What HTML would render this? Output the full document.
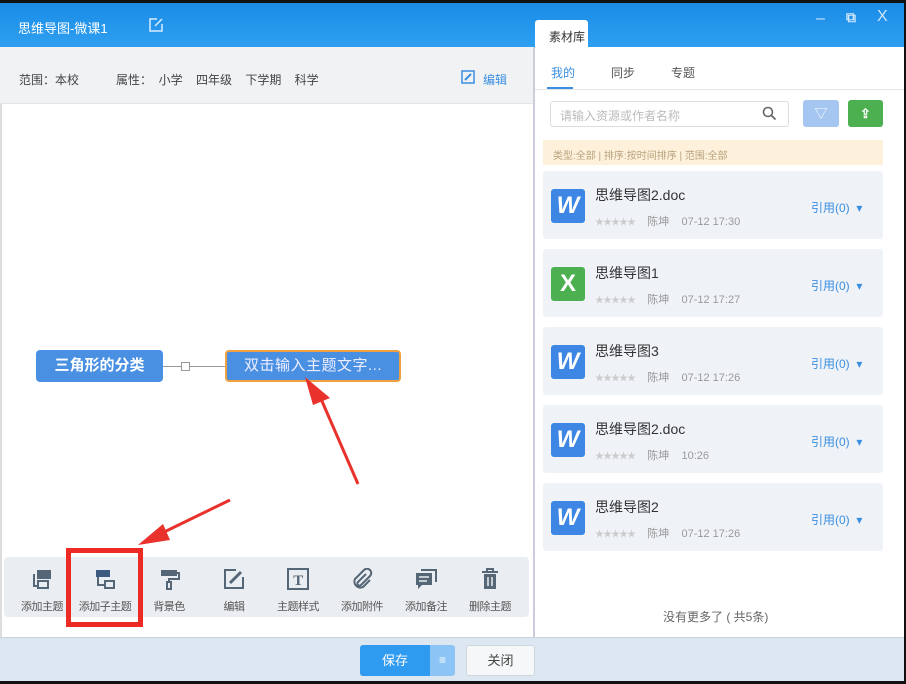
<!DOCTYPE html>
<html><head><meta charset="utf-8"><style>
*{margin:0;padding:0;box-sizing:border-box}
body{width:906px;height:684px;position:relative;overflow:hidden;background:#111;font-family:"Liberation Sans","Noto Sans CJK SC",sans-serif;font-size:12px;color:#333}
.a{position:absolute}
.tb{left:0;top:3px;width:904px;height:44px;background:linear-gradient(#1a8ce6,#2e9ff0)}
.card{left:543px;width:340px;height:68px;background:#eff3f8;border-radius:3px}
.ic{left:8px;top:18px;width:34px;height:34px;border-radius:3px;color:#fff;font-weight:bold;font-size:24px;text-align:center;line-height:34px;font-style:italic}
.nm{left:52px;top:14px;font-size:14px;color:#333}
.meta{left:52px;top:42px;font-size:11px;color:#999}
.meta b{color:#ccc;font-weight:normal;font-size:9px;letter-spacing:-1px}
.ref{left:268px;top:28px;color:#3b8ee0;font-size:12px}
.tool{top:568px;width:64px;text-align:center;font-size:11px;color:#555;white-space:nowrap;letter-spacing:-0.5px}
.tool svg{display:block;margin:0 auto 8px}
</style></head><body>
<div class="a tb"></div>
<div class="a" style="left:18px;top:18px;color:#fff;font-size:13px">思维导图-微课1</div>
<svg class="a" style="left:149px;top:18px" width="14" height="14" viewBox="0 0 14 14"><path d="M8 1H1v12h12V6" fill="none" stroke="#d8ecff" stroke-width="1.5"/><path d="M6 8l7-7" stroke="#d8ecff" stroke-width="1.5"/></svg>
<div class="a" style="left:816px;top:10px;color:#cfe6fb;font-size:16px">–</div>
<div class="a" style="left:846px;top:9px;color:#cfe6fb;font-size:14px;font-weight:bold">⧉</div>
<div class="a" style="left:877px;top:8px;color:#cfe6fb;font-size:16px">X</div>
<div class="a" style="left:0;top:47px;width:533px;height:590px;background:#fff"></div>
<div class="a" style="left:0;top:47px;width:533px;height:57px;background:#f1f2f4;border-bottom:1px solid #e4e4e4"></div>
<div class="a" style="left:19px;top:71px;font-size:12px;color:#444">范围：本校</div>
<div class="a" style="left:116px;top:71px;font-size:12px;color:#444">属性：&nbsp;&nbsp;小学&nbsp;&nbsp;&nbsp;&nbsp;四年级&nbsp;&nbsp;&nbsp;&nbsp;下学期&nbsp;&nbsp;&nbsp;&nbsp;科学</div>
<svg class="a" style="left:461px;top:70px" width="14" height="14" viewBox="0 0 14 14"><rect x="1" y="1" width="12" height="12" fill="none" stroke="#3b8ee0" stroke-width="1.5"/><path d="M4 10l6-6" stroke="#3b8ee0" stroke-width="2"/></svg>
<div class="a" style="left:483px;top:71px;color:#3b8ee0;font-size:12px">编辑</div>
<div class="a" style="left:0;top:104px;width:2px;height:533px;background:#ddd"></div>
<div class="a" style="left:36px;top:350px;width:127px;height:32px;background:#4a90e2;border-radius:4px;color:#fff;font-size:15px;font-weight:bold;text-align:center;line-height:32px">三角形的分类</div>
<div class="a" style="left:163px;top:366px;width:62px;height:1px;background:#999"></div>
<div class="a" style="left:181px;top:362px;width:9px;height:9px;border:1px solid #999;background:#fff"></div>
<div class="a" style="left:225px;top:350px;width:176px;height:32px;background:#4a90e2;border:2px solid #f0a040;border-radius:4px;color:#eef;font-size:15px;text-align:center;line-height:28px;letter-spacing:.5px">双击输入主题文字...</div>
<svg class="a" style="left:0;top:0" width="533" height="600"><path d="M358 484L318 392" stroke="#e8322b" stroke-width="3"/><path d="M305 377L330 398L313 405Z" fill="#e8322b"/><path d="M230 500L160 534" stroke="#e8322b" stroke-width="3"/><path d="M138 545L163 524L170 540Z" fill="#e8322b"/></svg>
<div class="a" style="left:4px;top:557px;width:525px;height:60px;background:#eaedf1;border-radius:4px"></div>
<div class="a tool" style="left:10px"><svg width="24" height="22" viewBox="0 0 24 22"><rect x="7" y="2" width="14" height="9" fill="#556677"/><path d="M4 6v12h14" fill="none" stroke="#556677" stroke-width="2"/><rect x="8" y="13" width="10" height="7" fill="#eaedf1" stroke="#556677" stroke-width="2"/></svg>添加主题</div>
<div class="a tool" style="left:73px"><svg width="24" height="22" viewBox="0 0 24 22"><rect x="3" y="2" width="14" height="7" fill="#3c5a80"/><path d="M5 9v8h7" fill="none" stroke="#556677" stroke-width="2"/><rect x="12" y="13" width="9" height="7" fill="#eaedf1" stroke="#556677" stroke-width="2"/></svg>添加子主题</div>
<div class="a tool" style="left:137px"><svg width="24" height="22" viewBox="0 0 24 22"><rect x="4" y="2" width="16" height="6" fill="#556677"/><path d="M20 5h2v6h-10v3" fill="none" stroke="#556677" stroke-width="2"/><rect x="10" y="14" width="4" height="7" fill="none" stroke="#556677" stroke-width="2"/></svg>背景色</div>
<div class="a tool" style="left:202px"><svg width="24" height="22" viewBox="0 0 24 22"><path d="M14 2H3v18h18V9" fill="none" stroke="#556677" stroke-width="2"/><path d="M8 15l11-11" stroke="#556677" stroke-width="3"/></svg>编辑</div>
<div class="a tool" style="left:266px"><svg width="24" height="22" viewBox="0 0 24 22"><rect x="2" y="1" width="20" height="20" fill="none" stroke="#556677" stroke-width="2"/><text x="12" y="17" font-size="15" font-weight="bold" text-anchor="middle" fill="#556677" font-family="Liberation Serif">T</text></svg>主题样式</div>
<div class="a tool" style="left:330px"><svg width="24" height="22" viewBox="0 0 24 22"><path d="M16 6l-8 8a2 2 0 003 3l9-9a4 4 0 00-6-6l-9 9a6 6 0 008 8l7-7" fill="none" stroke="#556677" stroke-width="2"/></svg>添加附件</div>
<div class="a tool" style="left:394px"><svg width="24" height="22" viewBox="0 0 24 22"><path d="M7 2h15v12" fill="none" stroke="#556677" stroke-width="2"/><path d="M2 5h16v12H8l-4 4v-4H2z" fill="#556677"/><path d="M5 9h10M5 13h8" stroke="#eaedf1" stroke-width="1.5"/></svg>添加备注</div>
<div class="a tool" style="left:458px"><svg width="24" height="22" viewBox="0 0 24 22"><path d="M4 4h16M9 4V1h6v3" fill="none" stroke="#556677" stroke-width="2"/><rect x="6" y="6" width="12" height="15" fill="#556677"/><path d="M10 9v9M14 9v9" stroke="#eaedf1" stroke-width="1.5"/></svg>删除主题</div>
<div class="a" style="left:66px;top:548px;width:77px;height:79px;border:5px solid #ee2a24"></div>
<div class="a" style="left:533px;top:47px;width:371px;height:590px;background:#fff;border-left:2px solid #ccd"></div>
<div class="a" style="left:535px;top:20px;width:53px;height:28px;background:#fff;border-radius:3px 3px 0 0;font-size:12px;padding:8px 0 0 14px;color:#333">素材库</div>
<div class="a" style="left:551px;top:64px;color:#3b8ee0;font-size:12px">我的</div>
<div class="a" style="left:611px;top:64px;color:#555;font-size:12px">同步</div>
<div class="a" style="left:671px;top:64px;color:#555;font-size:12px">专题</div>
<div class="a" style="left:547px;top:87px;width:26px;height:3px;background:#3b8ee0"></div>
<div class="a" style="left:535px;top:89px;width:369px;height:1px;background:#e6e6e6"></div>
<div class="a" style="left:550px;top:101px;width:239px;height:26px;border:1px solid #ddd;border-radius:3px;color:#bbb;font-size:12px;padding:5px 0 0 9px">请输入资源或作者名称</div>
<svg class="a" style="left:762px;top:106px" width="15" height="15" viewBox="0 0 15 15"><circle cx="6" cy="6" r="4.5" fill="none" stroke="#666" stroke-width="1.6"/><path d="M9.5 9.5l4 4" stroke="#666" stroke-width="1.8"/></svg>
<div class="a" style="left:803px;top:100px;width:36px;height:27px;background:#a5c6f0;border-radius:3px;color:#fff;text-align:center;line-height:27px;font-size:13px">▽</div>
<div class="a" style="left:848px;top:100px;width:35px;height:27px;background:#4caf50;border-radius:3px;color:#fff;text-align:center;line-height:27px;font-size:13px;font-weight:bold">⇪</div>
<div class="a" style="left:543px;top:140px;width:340px;height:25px;background:#fdf1dc;color:#b9a27c;font-size:10px;padding:7px 0 0 10px">类型:全部 | 排序:按时间排序 | 范围:全部</div>
<div class="a card" style="top:171px"><div class="a ic" style="background:#3d86e4">W</div><div class="a nm">思维导图2.doc</div><div class="a meta"><b>★★★★★</b>&nbsp;&nbsp;&nbsp;&nbsp;陈坤&nbsp;&nbsp;&nbsp;&nbsp;07-12 17:30</div><div class="a ref">引用(0)&nbsp;&nbsp;▾</div></div>
<div class="a card" style="top:249px"><div class="a ic" style="background:#4caf50;font-style:normal">X</div><div class="a nm">思维导图1</div><div class="a meta"><b>★★★★★</b>&nbsp;&nbsp;&nbsp;&nbsp;陈坤&nbsp;&nbsp;&nbsp;&nbsp;07-12 17:27</div><div class="a ref">引用(0)&nbsp;&nbsp;▾</div></div>
<div class="a card" style="top:327px"><div class="a ic" style="background:#3d86e4">W</div><div class="a nm">思维导图3</div><div class="a meta"><b>★★★★★</b>&nbsp;&nbsp;&nbsp;&nbsp;陈坤&nbsp;&nbsp;&nbsp;&nbsp;07-12 17:26</div><div class="a ref">引用(0)&nbsp;&nbsp;▾</div></div>
<div class="a card" style="top:405px"><div class="a ic" style="background:#3d86e4">W</div><div class="a nm">思维导图2.doc</div><div class="a meta"><b>★★★★★</b>&nbsp;&nbsp;&nbsp;&nbsp;陈坤&nbsp;&nbsp;&nbsp;&nbsp;10:26</div><div class="a ref">引用(0)&nbsp;&nbsp;▾</div></div>
<div class="a card" style="top:483px"><div class="a ic" style="background:#3d86e4">W</div><div class="a nm">思维导图2</div><div class="a meta"><b>★★★★★</b>&nbsp;&nbsp;&nbsp;&nbsp;陈坤&nbsp;&nbsp;&nbsp;&nbsp;07-12 17:26</div><div class="a ref">引用(0)&nbsp;&nbsp;▾</div></div>
<div class="a" style="left:663px;top:608px;color:#666;font-size:12px">没有更多了 ( 共5条)</div>
<div class="a" style="left:0;top:637px;width:904px;height:44px;background:#dce7f2;border-top:1px solid #c9d4df"></div>
<div class="a" style="left:360px;top:645px;width:70px;height:31px;background:#2e9af0;border-radius:3px 0 0 3px;color:#fff;font-size:13px;text-align:center;line-height:31px">保存</div>
<div class="a" style="left:430px;top:645px;width:25px;height:31px;background:#8cc4f5;border-radius:0 3px 3px 0;color:#fff;text-align:center;line-height:31px">≡</div>
<div class="a" style="left:466px;top:645px;width:69px;height:31px;background:#f5f7f9;border:1px solid #cfd6dd;border-radius:3px;color:#444;font-size:13px;text-align:center;line-height:29px">关闭</div>
</body></html>
